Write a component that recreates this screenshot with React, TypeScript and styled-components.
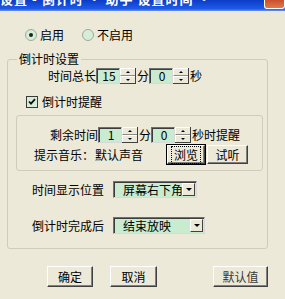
import React from 'react';
import styled, { createGlobalStyle } from 'styled-components';

const GlobalStyle = createGlobalStyle`
  html, body {
    margin: 0;
    padding: 0;
  }
  body {
    font-family: "Noto Sans CJK SC", "Liberation Sans", sans-serif;
    font-size: 12px;
    color: #000;
  }
`;

const Window = styled.div`
  width: 285px;
  height: 299px;
  background: #ece9d8;
  overflow: hidden;
  display: flex;
  flex-direction: column;
`;

const TitleBar = styled.div`
  height: 11px;
  flex: none;
  display: flex;
  justify-content: space-between;
  overflow: hidden;
  background: linear-gradient(#0a3cc8, #1f5ae6 80%, #6d94e8);
`;

const TitleText = styled.div`
  margin-top: -9px;
  line-height: 16px;
  font-size: 13px;
  font-weight: bold;
  color: #fff;
  white-space: nowrap;
  letter-spacing: 1px;
`;

const CloseButton = styled.div`
  width: 19px;
  height: 8px;
  margin-left: auto;
  background: linear-gradient(#c9502c, #e2784e);
  border: 1px solid #fff;
  border-top: none;
  border-radius: 0 0 3px 3px;
`;

const RadioRow = styled.div`
  display: flex;
  align-items: center;
  height: 14px;
  margin: 17px 0 0 25px;
  gap: 18px;
`;

const Choice = styled.label`
  display: flex;
  align-items: center;
  gap: 3px;
  line-height: 14px;
`;

const RadioCircle = styled.span`
  width: 10px;
  height: 10px;
  border-radius: 50%;
  border: 1px solid #a0a8a0;
  background: #d4eed8;
  display: flex;
  align-items: center;
  justify-content: center;
`;

const RadioDot = styled.span`
  width: 4px;
  height: 4px;
  border-radius: 50%;
  background: #1a2a1a;
`;

const GroupBox = styled.fieldset`
  margin: 10px 0 0 7px;
  width: 261px;
  box-sizing: border-box;
  padding: 0 0 14px 0;
  border: 1px solid #cfccbc;
  border-radius: 3px;
  min-width: 0;
`;

const Legend = styled.legend`
  margin-left: 9px;
  padding: 0 2px;
  line-height: 14px;
`;

const Row = styled.div<{ $left: number; $top: number; $height?: number }>`
  display: flex;
  align-items: center;
  height: ${p => p.$height ?? 16}px;
  margin: ${p => p.$top}px 0 0 ${p => p.$left}px;
  line-height: 14px;
  white-space: nowrap;
`;

const Field = styled.div`
  width: 24px;
  height: 16px;
  box-sizing: border-box;
  background: #c9ebcf;
  border: 1px solid;
  border-color: #6f6f6f #d8d8d8 #d8d8d8 #6f6f6f;
  box-shadow: inset 1px 1px 0 #3c3c3c;
  display: flex;
  align-items: center;
  justify-content: center;
  padding-left: 2px;
`;

const Spin = styled.div`
  width: 16px;
  height: 16px;
  box-sizing: border-box;
  display: flex;
  flex-direction: column;
  border-right: 1px solid #404040;
  border-bottom: 1px solid #404040;
`;

const SpinHalf = styled.div<{ $dir: 'up' | 'down' }>`
  flex: 1;
  background: #ece9d8;
  border-top: 1px solid #fff;
  border-left: 1px solid #fff;
  border-bottom: ${p => (p.$dir === 'up' ? '1px solid #8a8a8a' : 'none')};
  display: flex;
  align-items: center;
  justify-content: center;
  &::after {
    content: '';
    border-left: 2px solid transparent;
    border-right: 2px solid transparent;
    ${p => (p.$dir === 'up' ? 'border-bottom: 2px solid #000;' : 'border-top: 2px solid #000;')}
  }
`;

const Unit = styled.span<{ $gap?: number }>`
  margin: 0 ${p => p.$gap ?? 0}px 0 1px;
`;

const CheckBox = styled.span`
  width: 12px;
  height: 12px;
  box-sizing: border-box;
  border: 1px solid #3a3a3a;
  background: #d4eed8;
  display: flex;
  align-items: center;
  justify-content: center;
  margin-right: 4px;
`;

const InnerBox = styled.div`
  margin: 6px 0 0 8px;
  width: 247px;
  box-sizing: border-box;
  border: 1px solid #cfccbc;
  border-radius: 3px;
  padding-bottom: 6px;
`;

const Button = styled.button<{ $width: number; $default?: boolean }>`
  width: ${p => p.$width}px;
  height: 19px;
  box-sizing: border-box;
  padding: 0;
  font: inherit;
  font-size: 12px;
  color: #000;
  background: #ece9d8;
  border: 1px solid;
  border-color: #fff #404040 #404040 #fff;
  box-shadow: ${p =>
    p.$default
      ? '0 0 0 1px #000, inset -1px -1px 0 #808080'
      : 'inset -1px -1px 0 #808080'};
  display: flex;
  align-items: center;
  justify-content: center;
`;

const FocusText = styled.span`
  outline: 1px dotted #000;
  outline-offset: 1px;
  padding: 0 1px;
`;

const Select = styled.div<{ $width: number }>`
  width: ${p => p.$width}px;
  height: 17px;
  box-sizing: border-box;
  background: #c9ebcf;
  border: 1px solid;
  border-color: #6f6f6f #d8d8d8 #d8d8d8 #6f6f6f;
  box-shadow: inset 1px 1px 0 #3c3c3c;
  display: flex;
  align-items: center;
  overflow: hidden;
`;

const SelectText = styled.span`
  flex: 1;
  padding-left: 9px;
  overflow: hidden;
  white-space: nowrap;
`;

const ArrowButton = styled.span`
  width: 13px;
  height: 13px;
  flex: none;
  margin-right: 1px;
  box-sizing: border-box;
  background: #ece9d8;
  border: 1px solid;
  border-color: #fff #404040 #404040 #fff;
  display: flex;
  align-items: center;
  justify-content: center;
  &::after {
    content: '';
    border-left: 3px solid transparent;
    border-right: 3px solid transparent;
    border-top: 3px solid #000;
  }
`;

const Footer = styled.div`
  display: flex;
  margin: 17px 0 0 47px;
  height: 21px;
`;

const FooterButton = styled(Button)<{ $gapLeft: number; $faded?: boolean }>`
  height: 21px;
  margin-left: ${p => p.$gapLeft}px;
  color: ${p => (p.$faded ? '#3a3a3a' : '#000')};
`;

function SpinField({ value }: { value: string }) {
  return (
    <>
      <Field>{value}</Field>
      <Spin>
        <SpinHalf $dir="up" />
        <SpinHalf $dir="down" />
      </Spin>
    </>
  );
}

export default function App() {
  return (
    <Window>
      <GlobalStyle />
      <TitleBar>
        <TitleText>设置 - 倒计时 · 助手 设置时间 ·</TitleText>
        <CloseButton />
      </TitleBar>

      <RadioRow>
        <Choice>
          <RadioCircle>
            <RadioDot />
          </RadioCircle>
          启用
        </Choice>
        <Choice>
          <RadioCircle />
          不启用
        </Choice>
      </RadioRow>

      <GroupBox>
        <Legend>倒计时设置</Legend>

        <Row $left={40} $top={2}>
          时间总长
          <SpinField value="15" />
          <Unit>分</Unit>
          <SpinField value="0" />
          <Unit>秒</Unit>
        </Row>

        <Row $left={18} $top={11} $height={14}>
          <CheckBox>
            <svg width="8" height="8" viewBox="0 0 8 8">
              <path d="M1 3.5 L3 5.6 L7 1.2" fill="none" stroke="#111" strokeWidth="1.8" />
            </svg>
          </CheckBox>
          倒计时提醒
        </Row>

        <InnerBox>
          <Row $left={33} $top={11}>
            剩余时间
            <SpinField value="1" />
            <Unit>分</Unit>
            <SpinField value="0" />
            <Unit>秒时提醒</Unit>
          </Row>
          <Row $left={17} $top={2} $height={19}>
            提示音乐：<Unit>默认声音</Unit>
            <Button $width={38} $default style={{ marginLeft: 24 }}>
              <FocusText>浏览</FocusText>
            </Button>
            <Button $width={41} style={{ marginLeft: 2 }}>
              试听
            </Button>
          </Row>
        </InnerBox>

        <Row $left={24} $top={10} $height={17}>
          时间显示位置
          <Select $width={84} style={{ marginLeft: 9 }}>
            <SelectText>屏幕右下角</SelectText>
            <ArrowButton />
          </Select>
        </Row>

        <Row $left={24} $top={19} $height={17}>
          倒计时完成后
          <Select $width={92} style={{ marginLeft: 9 }}>
            <SelectText>结束放映</SelectText>
            <ArrowButton />
          </Select>
        </Row>
      </GroupBox>

      <Footer>
        <FooterButton $width={46} $gapLeft={0}>确定</FooterButton>
        <FooterButton $width={47} $gapLeft={17}>取消</FooterButton>
        <FooterButton $width={55} $gapLeft={56} $faded>默认值</FooterButton>
      </Footer>
    </Window>
  );
}
